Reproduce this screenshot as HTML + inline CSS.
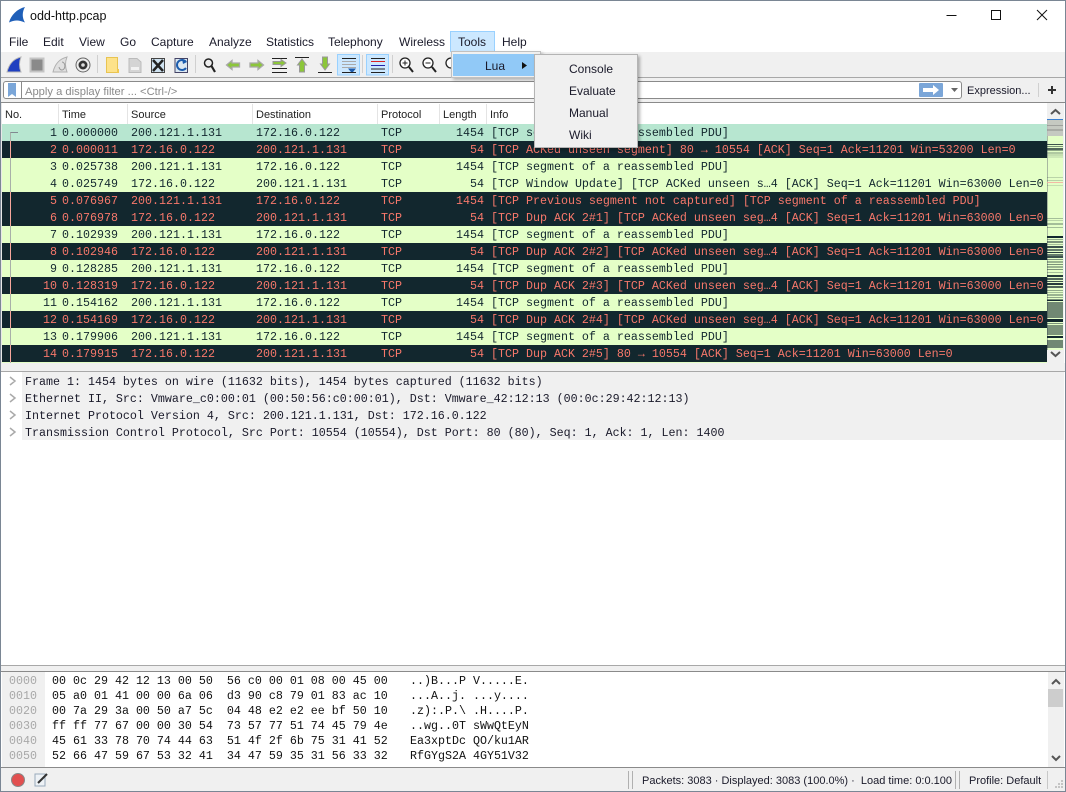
<!DOCTYPE html>
<html><head><meta charset="utf-8">
<style>
*{box-sizing:border-box}
html,body{margin:0;padding:0}
body{width:1066px;height:792px;position:relative;overflow:hidden;background:#fff;font-family:"Liberation Sans",sans-serif;font-size:12px;color:#1a1a2a}
.a{position:absolute;white-space:pre}
.m{position:absolute;top:35px;line-height:14px;font-size:12px}
.h{position:absolute;top:108px;line-height:14px;font-size:11px;color:#222}
.hs{position:absolute;top:104px;width:1px;height:20px;background:#e4e4e4}
.r{position:absolute;left:2px;width:1045px;height:17px;font:11.67px/17px "Liberation Mono",monospace;white-space:pre}
.r span{position:absolute;top:1px}
.g{background:#e4ffc7;color:#12272e}
.d{background:#12272e;color:#f7786b}
.s{background:#b7e6d0;color:#12272e}
.n{right:990px}.t{left:60px}.u{left:129px}.v{left:254px}.p{left:379px}.l{right:563px}.i{left:489px}
.dt{position:absolute;left:25px;font:11.67px/17px "Liberation Mono",monospace;white-space:pre;color:#1a1a2a}
.hx{position:absolute;font:11.67px/15px "Liberation Mono",monospace;white-space:pre;color:#111}
.mi{position:absolute;left:569px;font-size:12px;line-height:14px;color:#1a1a2a}
</style></head><body>

<!-- window frame -->
<div class="a" style="left:0;top:0;width:1066px;height:1px;background:#7a8694"></div>
<div class="a" style="left:0;top:0;width:1px;height:792px;background:#7a8694"></div>
<div class="a" style="left:1065px;top:0;width:1px;height:792px;background:#7a8694"></div>
<div class="a" style="left:0;top:791px;width:1066px;height:1px;background:#7a8694"></div>

<!-- title -->
<svg class="a" style="left:8px;top:7px" width="18" height="17" viewBox="0 0 18 17"><path d="M1 15.500C3 8 9 2 17 0C14 5 14 11 17 15.500Q12 13.500 9 13.500Q5 13.500 1 15.500Z" fill="#1f5fb8"/></svg>
<div class="a" style="left:30px;top:9px;font-size:12.5px;line-height:14px;color:#111">odd-http.pcap</div>
<svg class="a" style="left:940px;top:5px" width="120" height="20" viewBox="0 0 120 20" fill="none" stroke="#111"><path d="M6.500 10.500H16.500"/><rect x="51.500" y="5.500" width="9" height="9"/><path d="M97 5L107 15M107 5L97 15"/></svg>

<!-- menu -->
<div class="a" style="left:450px;top:31px;width:45px;height:21px;background:#cce8ff;border:1px solid #99d1ff"></div>
<div class="m" style="left:9px">File</div><div class="m" style="left:43px">Edit</div><div class="m" style="left:79px">View</div><div class="m" style="left:120px">Go</div><div class="m" style="left:151px">Capture</div><div class="m" style="left:209px">Analyze</div><div class="m" style="left:266px">Statistics</div><div class="m" style="left:328px">Telephony</div><div class="m" style="left:399px">Wireless</div><div class="m" style="left:458px">Tools</div><div class="m" style="left:502px">Help</div>

<!-- toolbar -->
<div class="a" style="left:1px;top:52px;width:1064px;height:26px;background:#f0f0f0"></div>
<div class="a" style="left:1px;top:77px;width:1064px;height:1px;background:#a8a8a8"></div>
<svg class="a" style="left:0;top:52px" width="500" height="26" viewBox="0 0 500 26" fill="none">
<path d="M7 20C9 12 13 7 21 5C19 10 19 15 21 20Z" fill="#1f3fc0" stroke="#b8b8b8"/>
<rect x="30.500" y="6.500" width="13" height="13" fill="#8a8a8a" stroke="#c4c4c4" stroke-width="2"/>
<path d="M53 20C55 12 59 7 67 5C65 10 65 15 67 20Z" fill="#e0e0e0" stroke="#b0b0b0"/><path d="M62 10A3 4 0 1 1 59 15" stroke="#999"/>
<circle cx="83" cy="13" r="7" fill="#eee" stroke="#666"/><circle cx="83" cy="13" r="4.500" fill="#333"/><circle cx="83" cy="13" r="1.800" fill="#ddd"/>
<path d="M97.500 3V21" stroke="#d0d0d0"/>
<path d="M106.500 5.500H117.500V20.500H106.500Z" fill="#fde28a" stroke="#e8c452"/><path d="M117 17H119V21H117Z" fill="#f0c850"/>
<path d="M129 6.500H137L141 10V20.500H129Z" fill="#d4d4d4" stroke="#bbb"/><path d="M131 15H139V18H131Z" fill="#f2f2f2"/>
<path d="M151.500 6.500H164.500V20.500H151.500Z" fill="#cfe2f0" stroke="#444"/><path d="M153 8L163 19M163 8L153 19" stroke="#222" stroke-width="2.500"/>
<path d="M175 6.500H187.500V20.500H175Z" fill="#dce8f2" stroke="#446"/><path d="M186 10A5 5 0 1 0 186 16" stroke="#1c5cae" stroke-width="2"/><path d="M182 7L187 10L183 12Z" fill="#1c5cae"/>
<path d="M195.500 3V21" stroke="#d0d0d0"/>
<circle cx="208.500" cy="11" r="4" fill="#eee" stroke="#222" stroke-width="1.500"/><path d="M211.500 14L215 20" stroke="#222" stroke-width="2.200"/>
<path d="M226.500 13L232 8.500V11H239.500V15H232V17.500Z" fill="#8cc63a" stroke="#a8a8a8" stroke-width="1.300"/>
<path d="M263.500 13L258 8.500V11H250V15H258V17.500Z" fill="#8cc63a" stroke="#a8a8a8" stroke-width="1.300"/>
<path d="M272 6.500H287M272 16.500H287M272 20.500H287" stroke="#222"/><path d="M273 9.500H281V7.500L286 11L281 14.500V12.500H273Z" fill="#8cc63a" stroke="#999"/>
<path d="M295 5.500H309" stroke="#222"/><path d="M302 7L306.500 13H304.500V20H299.500V13H297.500Z" fill="#8cc63a" stroke="#999"/>
<path d="M318 20.500H332" stroke="#222"/><path d="M325 18L320.500 12H322.500V5H327.500V12H329.500Z" fill="#8cc63a" stroke="#999"/>
<rect x="337.500" y="2.500" width="22" height="20.500" fill="#cce8ff" stroke="#99d1ff"/>
<path d="M342 9.500H356M342 12.500H356M342 15.500H356" stroke="#aaa"/><path d="M342 6.500H356M342 20.500H356" stroke="#222"/><path d="M348 16.500H356L353 20H351Z" fill="#1c5cae"/>
<path d="M362.500 3V21" stroke="#d0d0d0"/>
<rect x="366.500" y="2.500" width="22" height="20.500" fill="#cce8ff" stroke="#99d1ff"/>
<path d="M371 6.500H385M371 17H385M371 20.500H385" stroke="#222"/><path d="M371 9.500H385" stroke="#d22"/><path d="M371 13.500H385" stroke="#22a"/>
<path d="M392.500 3V21" stroke="#d0d0d0"/>
<circle cx="405" cy="11" r="5" fill="#fff" stroke="#222" stroke-width="1.300"/><path d="M402.500 11H407.500M405 8.500V13.500" stroke="#222"/><path d="M409 15L413 20" stroke="#222" stroke-width="2"/>
<circle cx="428" cy="11" r="5" fill="#fff" stroke="#222" stroke-width="1.300"/><path d="M425.500 11H430.500" stroke="#222"/><path d="M432 15L436 20" stroke="#222" stroke-width="2"/>
<circle cx="451" cy="11" r="5" fill="#fff" stroke="#222" stroke-width="1.300"/>
</svg>

<!-- filter -->
<div class="a" style="left:1px;top:78px;width:1064px;height:24px;background:#f0f0f0"></div>
<div class="a" style="left:3px;top:81px;width:959px;height:18px;background:#fff;border:1px solid #8a8a8a;border-radius:3px"></div>
<div class="a" style="left:21px;top:82px;width:1px;height:16px;background:#8a8a8a"></div>
<svg class="a" style="left:7px;top:83px" width="11" height="14" viewBox="0 0 11 14"><path d="M1 0H9V14L5 11L1 14Z" fill="#7ba6d8"/></svg>
<div class="a" style="left:25px;top:85px;font-size:11.2px;line-height:14px;color:#8a8a8a">Apply a display filter ... &lt;Ctrl-/&gt;</div>
<svg class="a" style="left:919px;top:83px" width="40" height="14" viewBox="0 0 40 14"><rect width="24" height="14" rx="1" fill="#7ba6d8"/><path d="M4 5H14V2L20 7L14 12V9H4Z" fill="#fff"/><path d="M32 5H39L35.500 9Z" fill="#666"/></svg>
<div class="a" style="left:967px;top:84px;font-size:11px;line-height:14px">Expression...</div>
<div class="a" style="left:1038px;top:83px;width:1px;height:14px;background:#d0d0d0"></div>
<svg class="a" style="left:1047px;top:85px" width="10" height="10" viewBox="0 0 10 10"><path d="M1 5H9M5 1V9" stroke="#333" stroke-width="2"/></svg>

<!-- list frame -->
<div class="a" style="left:1px;top:102px;width:1064px;height:1px;background:#8a8a8a"></div>
<div class="a" style="left:1px;top:103px;width:1px;height:260px;background:#e8e8e8"></div>

<!-- header -->
<div class="h" style="left:5px">No.</div><div class="h" style="left:62px">Time</div><div class="h" style="left:131px">Source</div><div class="h" style="left:256px">Destination</div><div class="h" style="left:381px">Protocol</div><div class="h" style="left:443px">Length</div><div class="h" style="left:490px">Info</div>
<div class="hs" style="left:58px"></div><div class="hs" style="left:127px"></div><div class="hs" style="left:252px"></div><div class="hs" style="left:377px"></div><div class="hs" style="left:439px"></div><div class="hs" style="left:486px"></div>

<!-- rows -->
<div class="r s" style="top:124px"><span class="n">1</span><span class="t">0.000000</span><span class="u">200.121.1.131</span><span class="v">172.16.0.122</span><span class="p">TCP</span><span class="l">1454</span><span class="i">[TCP segment of a reassembled PDU]</span></div>
<div class="r d" style="top:141px"><span class="n">2</span><span class="t">0.000011</span><span class="u">172.16.0.122</span><span class="v">200.121.1.131</span><span class="p">TCP</span><span class="l">54</span><span class="i">[TCP ACKed unseen segment] 80 → 10554 [ACK] Seq=1 Ack=11201 Win=53200 Len=0</span></div>
<div class="r g" style="top:158px"><span class="n">3</span><span class="t">0.025738</span><span class="u">200.121.1.131</span><span class="v">172.16.0.122</span><span class="p">TCP</span><span class="l">1454</span><span class="i">[TCP segment of a reassembled PDU]</span></div>
<div class="r g" style="top:175px"><span class="n">4</span><span class="t">0.025749</span><span class="u">172.16.0.122</span><span class="v">200.121.1.131</span><span class="p">TCP</span><span class="l">54</span><span class="i">[TCP Window Update] [TCP ACKed unseen s…4 [ACK] Seq=1 Ack=11201 Win=63000 Len=0</span></div>
<div class="r d" style="top:192px"><span class="n">5</span><span class="t">0.076967</span><span class="u">200.121.1.131</span><span class="v">172.16.0.122</span><span class="p">TCP</span><span class="l">1454</span><span class="i">[TCP Previous segment not captured] [TCP segment of a reassembled PDU]</span></div>
<div class="r d" style="top:209px"><span class="n">6</span><span class="t">0.076978</span><span class="u">172.16.0.122</span><span class="v">200.121.1.131</span><span class="p">TCP</span><span class="l">54</span><span class="i">[TCP Dup ACK 2#1] [TCP ACKed unseen seg…4 [ACK] Seq=1 Ack=11201 Win=63000 Len=0</span></div>
<div class="r g" style="top:226px"><span class="n">7</span><span class="t">0.102939</span><span class="u">200.121.1.131</span><span class="v">172.16.0.122</span><span class="p">TCP</span><span class="l">1454</span><span class="i">[TCP segment of a reassembled PDU]</span></div>
<div class="r d" style="top:243px"><span class="n">8</span><span class="t">0.102946</span><span class="u">172.16.0.122</span><span class="v">200.121.1.131</span><span class="p">TCP</span><span class="l">54</span><span class="i">[TCP Dup ACK 2#2] [TCP ACKed unseen seg…4 [ACK] Seq=1 Ack=11201 Win=63000 Len=0</span></div>
<div class="r g" style="top:260px"><span class="n">9</span><span class="t">0.128285</span><span class="u">200.121.1.131</span><span class="v">172.16.0.122</span><span class="p">TCP</span><span class="l">1454</span><span class="i">[TCP segment of a reassembled PDU]</span></div>
<div class="r d" style="top:277px"><span class="n">10</span><span class="t">0.128319</span><span class="u">172.16.0.122</span><span class="v">200.121.1.131</span><span class="p">TCP</span><span class="l">54</span><span class="i">[TCP Dup ACK 2#3] [TCP ACKed unseen seg…4 [ACK] Seq=1 Ack=11201 Win=63000 Len=0</span></div>
<div class="r g" style="top:294px"><span class="n">11</span><span class="t">0.154162</span><span class="u">200.121.1.131</span><span class="v">172.16.0.122</span><span class="p">TCP</span><span class="l">1454</span><span class="i">[TCP segment of a reassembled PDU]</span></div>
<div class="r d" style="top:311px"><span class="n">12</span><span class="t">0.154169</span><span class="u">172.16.0.122</span><span class="v">200.121.1.131</span><span class="p">TCP</span><span class="l">54</span><span class="i">[TCP Dup ACK 2#4] [TCP ACKed unseen seg…4 [ACK] Seq=1 Ack=11201 Win=63000 Len=0</span></div>
<div class="r g" style="top:328px"><span class="n">13</span><span class="t">0.179906</span><span class="u">200.121.1.131</span><span class="v">172.16.0.122</span><span class="p">TCP</span><span class="l">1454</span><span class="i">[TCP segment of a reassembled PDU]</span></div>
<div class="r d" style="top:345px"><span class="n">14</span><span class="t">0.179915</span><span class="u">172.16.0.122</span><span class="v">200.121.1.131</span><span class="p">TCP</span><span class="l">54</span><span class="i">[TCP Dup ACK 2#5] 80 → 10554 [ACK] Seq=1 Ack=11201 Win=63000 Len=0</span></div>
<div class="a" style="left:2px;top:362px;width:1045px;height:1px;background:#e4ffc7"></div>
<svg class="a" style="left:9px;top:124px" width="10" height="239"><path d="M1.500 8V239" stroke="#a8b0a8"/><path d="M1.500 17V34M1.500 68V102M1.500 119V136M1.500 153V170M1.500 187V204M1.500 221V238" stroke="#f7a79c"/><path d="M1.500 8.500H9" stroke="#808890"/></svg>

<!-- packet list scrollbar -->
<div class="a" style="left:1047px;top:103px;width:17px;height:260px;background:#f0f0f0"></div>
<svg class="a" style="left:1047px;top:103px" width="17" height="260" viewBox="0 0 17 260">
<path d="M4 11L8.500 7L13 11" fill="none" stroke="#555" stroke-width="2"/><path d="M4 249L8.500 253L13 249" fill="none" stroke="#555" stroke-width="2"/>
<rect y="17" width="16" height="230" fill="#e4ffc7"/>
<rect x="0" y="17" width="1" height="230" fill="#a8b8a0"/>
<g fill="#12272e">
<rect y="41" width="16" height="1" opacity=".8"/><rect y="43" width="16" height="1" opacity=".5"/><rect y="45" width="16" height="2" opacity=".7"/><rect y="47" width="16" height="1" opacity=".4"/><rect y="49" width="16" height="2" opacity=".25"/><rect y="51" width="16" height="2" opacity=".15"/><rect y="53" width="16" height="2" opacity=".1"/>
<rect y="74" width="16" height="1" opacity=".2"/><rect y="77" width="16" height="1" opacity=".2"/><rect y="82" width="16" height="1" opacity=".15"/>
<rect y="115" width="16" height="1" opacity=".3"/><rect y="117" width="16" height="1" opacity=".2"/><rect y="120" width="16" height="2" opacity=".3"/><rect y="124" width="16" height="1" opacity=".3"/>
<rect y="133" width="16" height="2"/><rect y="136" width="16" height="1" opacity=".4"/><rect y="138" width="16" height="2" opacity=".5"/><rect y="141" width="16" height="1" opacity=".3"/>
<rect y="143" width="16" height="2" opacity=".8"/><rect y="146" width="16" height="2" opacity=".6"/><rect y="149" width="16" height="1" opacity=".9"/><rect y="151" width="16" height="2" opacity=".6"/><rect y="153" width="16" height="2" opacity=".8"/>
<rect y="156" width="16" height="1" opacity=".5"/><rect y="158" width="16" height="2" opacity=".35"/><rect y="161" width="16" height="1" opacity=".5"/><rect y="163" width="16" height="2" opacity=".35"/><rect y="166" width="16" height="1" opacity=".5"/>
<rect y="169" width="16" height="1" opacity=".3"/><rect y="172" width="16" height="2" opacity=".9"/><rect y="175" width="16" height="2" opacity=".7"/><rect y="178" width="16" height="1" opacity=".8"/><rect y="180" width="16" height="2" opacity=".9"/><rect y="183" width="16" height="2" opacity=".7"/>
<rect y="187" width="16" height="1" opacity=".4"/><rect y="189" width="16" height="1" opacity=".3"/><rect y="191" width="16" height="2" opacity=".35"/><rect y="194" width="16" height="1" opacity=".4"/><rect y="196" width="16" height="1" opacity=".5"/>
<rect y="197" width="16" height="1"/><rect y="199" width="16" height="16" opacity=".55"/><rect y="216" width="16" height="3"/><rect y="220" width="16" height="1" opacity=".5"/><rect y="222" width="16" height="10" opacity=".5"/><rect y="233" width="16" height="2"/><rect y="237" width="16" height="8" opacity=".55"/>
</g>
<rect y="79" width="16" height="1" fill="#f7a79c" opacity=".8"/>
<rect x="0" y="17" width="16" height="16" fill="#c0c0c0" opacity=".85"/><rect y="22" width="16" height="1" fill="#666" opacity=".4"/><rect y="26" width="16" height="2" fill="#666" opacity=".3"/><rect x="0" y="16" width="16" height="1" fill="#3a7fd0"/>
</svg>

<!-- splitter -->
<div class="a" style="left:1px;top:363px;width:1064px;height:8px;background:#f0f0f0"></div>
<div class="a" style="left:1px;top:371px;width:1064px;height:1px;background:#a8a8a8"></div>

<!-- details -->
<div class="a" style="left:22px;top:372px;width:1042px;height:68px;background:#f0f0f0"></div>
<svg class="a" style="left:8px;top:376px" width="10" height="62" viewBox="0 0 10 62" fill="none" stroke="#aaa" stroke-width="1.500"><path d="M2 1L7 5L2 9M2 18L7 22L2 26M2 35L7 39L2 43M2 52L7 56L2 60"/></svg>
<div class="dt" style="top:374px">Frame 1: 1454 bytes on wire (11632 bits), 1454 bytes captured (11632 bits)</div>
<div class="dt" style="top:391px">Ethernet II, Src: Vmware_c0:00:01 (00:50:56:c0:00:01), Dst: Vmware_42:12:13 (00:0c:29:42:12:13)</div>
<div class="dt" style="top:408px">Internet Protocol Version 4, Src: 200.121.1.131, Dst: 172.16.0.122</div>
<div class="dt" style="top:425px">Transmission Control Protocol, Src Port: 10554 (10554), Dst Port: 80 (80), Seq: 1, Ack: 1, Len: 1400</div>

<!-- splitter 2 -->
<div class="a" style="left:1px;top:665px;width:1064px;height:1px;background:#a8a8a8"></div>
<div class="a" style="left:1px;top:666px;width:1064px;height:5px;background:#f0f0f0"></div>
<div class="a" style="left:1px;top:671px;width:1064px;height:1px;background:#8a8a8a"></div>

<!-- hex -->
<div class="a" style="left:2px;top:672px;width:43px;height:95px;background:#f0f0f0"></div>
<div class="hx" style="left:9px;top:674px;color:#a8a8a8">0000
0010
0020
0030
0040
0050</div>
<div class="hx" style="left:52px;top:674px">00 0c 29 42 12 13 00 50  56 c0 00 01 08 00 45 00
05 a0 01 41 00 00 6a 06  d3 90 c8 79 01 83 ac 10
00 7a 29 3a 00 50 a7 5c  04 48 e2 e2 ee bf 50 10
ff ff 77 67 00 00 30 54  73 57 77 51 74 45 79 4e
45 61 33 78 70 74 44 63  51 4f 2f 6b 75 31 41 52
52 66 47 59 67 53 32 41  34 47 59 35 31 56 33 32</div>
<div class="hx" style="left:410px;top:674px">..)B...P V.....E.
...A..j. ...y....
.z):.P.\ .H....P.
..wg..0T sWwQtEyN
Ea3xptDc QO/ku1AR
RfGYgS2A 4GY51V32</div>
<div class="a" style="left:1048px;top:672px;width:16px;height:95px;background:#f0f0f0"></div>
<div class="a" style="left:1048px;top:689px;width:15px;height:18px;background:#cdcdcd"></div>
<svg class="a" style="left:1048px;top:672px" width="16" height="95" viewBox="0 0 16 95" fill="none" stroke="#555" stroke-width="2"><path d="M4 12L8 8L12 12M4 84L8 88L12 84"/></svg>

<!-- status bar -->
<div class="a" style="left:1px;top:767px;width:1064px;height:1px;background:#8a8a8a"></div>
<div class="a" style="left:1px;top:768px;width:1064px;height:23px;background:#f0f0f0"></div>
<svg class="a" style="left:9px;top:771px" width="42" height="18" viewBox="0 0 42 18"><circle cx="9" cy="9" r="6.500" fill="#e25050" stroke="#888"/><path d="M26 3H36V15H26Z" fill="#eef2f6" stroke="#9ab"/><path d="M29 12L38 3" stroke="#333" stroke-width="2"/></svg>
<div class="a" style="left:628px;top:771px;width:1px;height:18px;background:#b0b0b0"></div><div class="a" style="left:632px;top:771px;width:1px;height:18px;background:#b0b0b0"></div>
<div class="a" style="left:642px;top:774px;font-size:11px;line-height:14px">Packets: 3083 · Displayed: 3083 (100.0%) ·  Load time: 0:0.100</div>
<div class="a" style="left:955px;top:771px;width:1px;height:18px;background:#b0b0b0"></div><div class="a" style="left:959px;top:771px;width:1px;height:18px;background:#b0b0b0"></div>
<div class="a" style="left:969px;top:774px;font-size:11px;line-height:14px">Profile: Default</div>
<div class="a" style="left:1047px;top:771px;width:1px;height:18px;background:#c8c8c8"></div>
<svg class="a" style="left:1054px;top:779px" width="10" height="10"><path d="M7 1h2v2h-2zM4 4h2v2h-2zM7 4h2v2h-2zM1 7h2v2h-2zM4 7h2v2h-2zM7 7h2v2h-2z" fill="#c4c4c4"/></svg>

<!-- Tools menu -->
<div class="a" style="left:451px;top:51px;width:90px;height:27px;background:#f0f0f0;border:1px solid #c0c0c0;box-shadow:2px 2px 3px rgba(0,0,0,.25)"></div>
<div class="a" style="left:453px;top:54px;width:82px;height:22px;background:#91c9f7"></div>
<div class="a" style="left:485px;top:59px;font-size:12px;line-height:14px">Lua</div>
<svg class="a" style="left:522px;top:62px" width="5" height="7"><path d="M0 0L5 3.500L0 7Z" fill="#111"/></svg>
<div class="a" style="left:534px;top:54px;width:104px;height:94px;background:#f0f0f0;border:1px solid #b4b4b4;box-shadow:2px 2px 3px rgba(0,0,0,.3)"></div>
<div class="mi" style="top:62px">Console</div>
<div class="mi" style="top:84px">Evaluate</div>
<div class="mi" style="top:106px">Manual</div>
<div class="mi" style="top:128px">Wiki</div>

</body></html>
